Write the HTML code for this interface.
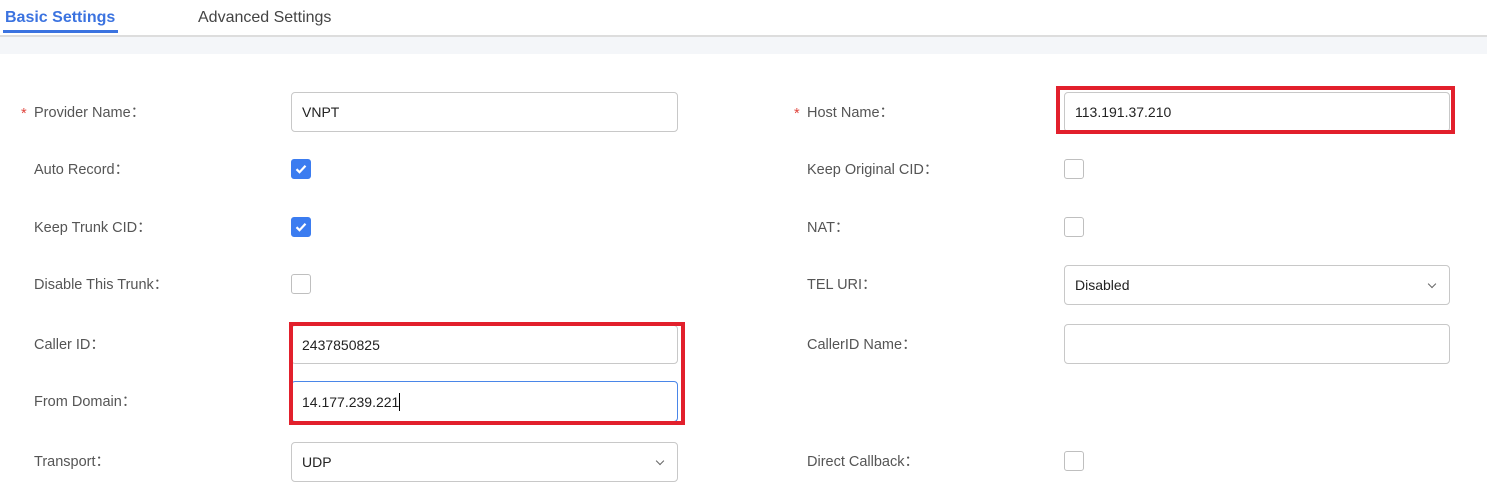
<!DOCTYPE html>
<html><head><meta charset="utf-8"><style>
body{margin:0;width:1494px;height:497px;background:#fff;font-family:"Liberation Sans",sans-serif;position:relative;overflow:hidden;color:#333}
.a{position:absolute}
.lbl{position:absolute;font-size:14.5px;color:#555;line-height:16px}
.star{color:#e0443c;position:absolute;left:-13px;top:1px}
.inp{position:absolute;box-sizing:border-box;border:1px solid #c8c8c8;border-radius:4px;background:#fff;font-size:14px;color:#222;padding-left:10px;display:flex;align-items:center}
.cb{position:absolute;width:20px;height:20px;box-sizing:border-box;border:1px solid #bfbfbf;border-radius:3px;background:#fff}
.cb.on{background:#3b7cf0;border-color:#3b7cf0}
.red{position:absolute;border:4px solid #e2202c;box-sizing:border-box}
.arr{position:absolute;right:14px;top:15px;width:5px;height:5px;border-right:1px solid #666;border-bottom:1px solid #666;transform:rotate(45deg)}
</style></head><body>
<div class="a" style="left:5px;top:9px;font-size:16px;font-weight:bold;color:#3b73e0">Basic Settings</div>
<div class="a" style="left:3px;top:30px;width:115px;height:3px;background:#3b73e0"></div>
<div class="a" style="left:198px;top:9px;font-size:16px;color:#444">Advanced Settings</div>
<div class="a" style="left:0;top:35px;width:1487px;height:2px;background:#ddd"></div>
<div class="a" style="left:0;top:37px;width:1487px;height:17px;background:#f4f6f9"></div>

<div class="lbl" style="left:34px;top:105px"><span class="star">*</span>Provider Name：</div>
<div class="inp" style="left:291px;top:92px;width:387px;height:40px">VNPT</div>
<div class="lbl" style="left:34px;top:162px">Auto Record：</div>
<div class="cb on" style="left:291px;top:159px"><svg width="18" height="18" viewBox="0 0 18 18"><path d="M4.5 9.2l3 3 6-6.5" stroke="#fff" stroke-width="2.2" fill="none"/></svg></div>
<div class="lbl" style="left:34px;top:220px">Keep Trunk CID：</div>
<div class="cb on" style="left:291px;top:217px"><svg width="18" height="18" viewBox="0 0 18 18"><path d="M4.5 9.2l3 3 6-6.5" stroke="#fff" stroke-width="2.2" fill="none"/></svg></div>
<div class="lbl" style="left:34px;top:277px">Disable This Trunk：</div>
<div class="cb" style="left:291px;top:274px"></div>
<div class="lbl" style="left:34px;top:337px">Caller ID：</div>
<div class="inp" style="left:291px;top:325px;width:387px;height:39px">2437850825</div>
<div class="lbl" style="left:34px;top:394px">From Domain：</div>
<div class="inp" style="left:291px;top:381px;width:387px;height:41px;border-color:#4a86e8">14.177.239.221<span style="display:inline-block;width:1px;height:18px;background:#000"></span></div>
<div class="red" style="left:289px;top:322px;width:396px;height:103px"></div>
<div class="lbl" style="left:34px;top:454px">Transport：</div>
<div class="inp" style="left:291px;top:442px;width:387px;height:40px">UDP<div class="arr"></div></div>

<div class="lbl" style="left:807px;top:105px"><span class="star">*</span>Host Name：</div>
<div class="inp" style="left:1064px;top:92px;width:386px;height:40px">113.191.37.210</div>
<div class="red" style="left:1056px;top:86px;width:399px;height:48px"></div>
<div class="lbl" style="left:807px;top:162px">Keep Original CID：</div>
<div class="cb" style="left:1064px;top:159px"></div>
<div class="lbl" style="left:807px;top:220px">NAT：</div>
<div class="cb" style="left:1064px;top:217px"></div>
<div class="lbl" style="left:807px;top:277px">TEL URI：</div>
<div class="inp" style="left:1064px;top:265px;width:386px;height:40px">Disabled<div class="arr"></div></div>
<div class="lbl" style="left:807px;top:337px">CallerID Name：</div>
<div class="inp" style="left:1064px;top:324px;width:386px;height:40px"></div>
<div class="lbl" style="left:807px;top:454px">Direct Callback：</div>
<div class="cb" style="left:1064px;top:451px"></div>
</body></html>
